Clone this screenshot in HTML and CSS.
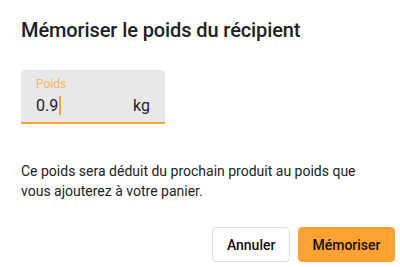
FILE: index.html
```html
<!DOCTYPE html>
<html lang="fr">
<head>
    <meta charset="UTF-8">
    <meta name="viewport" content="width=device-width, initial-scale=1.0">
    <title>Mémoriser le poids du récipient</title>
    <link rel="stylesheet" href="styles.css">
</head>
<body>
    <div class="dialog">
        <h2 class="dialog-title">Mémoriser le poids du récipient</h2>

        <div class="dialog-content">
            <div class="field">
                <div class="field-label">Poids</div>
                <div class="field-row">
                    <span class="field-value">0.9<span class="caret"></span></span>
                    <span class="field-suffix">kg</span>
                </div>
            </div>

            <p class="hint">Ce poids sera déduit du prochain produit au poids que vous ajouterez à votre panier.</p>
        </div>

        <div class="dialog-actions">
            <button class="btn btn-outline">Annuler</button>
            <button class="btn btn-primary">Mémoriser</button>
        </div>
    </div>
</body>
</html>
```

FILE: styles.css
```css
* {
    margin: 0;
    padding: 0;
    box-sizing: border-box;
}

body {
    font-family: Roboto, "Liberation Sans", sans-serif;
    color: #212121;
    background: #fff;
}

.dialog {
    width: 400px;
    padding-top: 18px;
}

.dialog-title {
    padding: 0 21px;
    font-size: 20px;
    line-height: 24px;
    font-weight: 500;
    letter-spacing: -0.1px;
}

.dialog-content {
    padding: 0 21px;
}

.field {
    width: 144px;
    height: 54px;
    margin-top: 28px;
    padding: 6px 15px 0;
    background: #e8e8e8;
    border-bottom: 2px solid #f5a33a;
    border-radius: 4px 4px 0 0;
}

.field-label {
    font-size: 12px;
    line-height: 16px;
    color: #f2b46a;
}

.field-row {
    display: flex;
    justify-content: space-between;
    margin-top: 2px;
    font-size: 16px;
    line-height: 24px;
    color: #212121;
}

.caret {
    display: inline-block;
    width: 2px;
    height: 19px;
    margin-left: 1px;
    vertical-align: -4px;
    background: #f5a33a;
}

.hint {
    margin-top: 37px;
    font-size: 14px;
    line-height: 20px;
    color: #222;
}

.dialog-actions {
    display: flex;
    justify-content: flex-end;
    gap: 8px;
    margin-top: 26px;
    padding: 0 5px;
}

.btn {
    height: 35px;
    padding: 0 13.5px;
    font-family: inherit;
    font-size: 14px;
    font-weight: 500;
    color: #111;
    border-radius: 4px;
    cursor: pointer;
}

.btn-outline {
    background: #fff;
    border: 1px solid #dedede;
}

.btn-primary {
    background: #ffa234;
    border: 1px solid #ffa234;
}
```
